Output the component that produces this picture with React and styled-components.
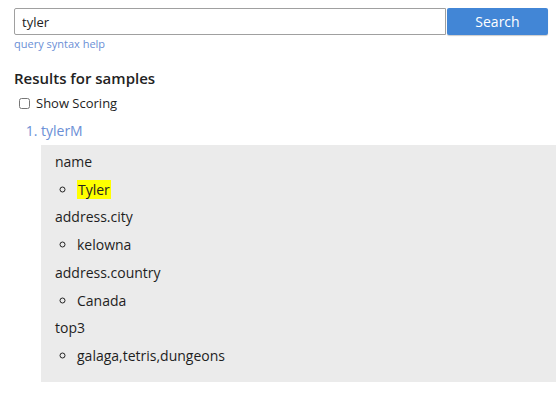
import styled, { createGlobalStyle } from "styled-components";

const GlobalStyle = createGlobalStyle`
  html, body {
    margin: 0;
    padding: 0;
    background: #fff;
    font-family: "Open Sans", "Liberation Sans", sans-serif;
    color: #222;
  }
`;

const Page = styled.div`
  padding: 8px 0 0 14px;
`;

const SearchBar = styled.form`
  display: flex;
  width: 534px;
  height: 27px;
`;

const SearchInput = styled.input`
  flex: 1;
  box-sizing: border-box;
  height: 27px;
  border: 1px solid #a0a0a0;
  border-radius: 2px 0 0 2px;
  padding: 0 7px;
  font-family: inherit;
  font-size: 13px;
  color: #222;
  outline: none;
`;

const SearchButton = styled.button`
  width: 101px;
  height: 27px;
  margin-left: 1px;
  border: none;
  border-radius: 2px;
  background: #4286d6;
  color: #fff;
  font-family: inherit;
  font-size: 14px;
  box-shadow: 0 1px 1px rgba(0, 0, 0, 0.2);
`;

const HelpLink = styled.a`
  display: block;
  margin-top: 2px;
  font-size: 11px;
  color: #6b8fd6;
  text-decoration: none;
  line-height: 14px;
`;

const Heading = styled.h3`
  margin: 17px 0 0;
  font-size: 15px;
  font-weight: 600;
  line-height: 20px;
`;

const ScoreToggle = styled.label`
  display: flex;
  align-items: center;
  gap: 6px;
  margin: 6px 0 0 5px;
  font-size: 13px;
  line-height: 18px;
  input {
    margin: 0;
    width: 11px;
    height: 11px;
  }
`;

const ResultList = styled.ol`
  margin: 9px 0 0;
  padding: 0 0 0 27px;
  font-size: 14px;
  > li::marker {
    color: #6b8fd6;
  }
`;

const ResultName = styled.a`
  color: #6b8fd6;
  text-decoration: none;
  line-height: 20px;
`;

const FieldBox = styled.div`
  margin: 4px 0 0;
  padding: 3px 14px 12px;
  background: #ebebeb;
  color: #1e1e1e;
`;

const FieldName = styled.div`
  line-height: 27.7px;
`;

const ValueList = styled.ul`
  margin: 0;
  padding: 0 0 0 22px;
  list-style: circle;
  li {
    line-height: 27.7px;
  }
  li::marker {
    color: #222;
  }
`;

const Mark = styled.mark`
  background: #ffff00;
  color: #222;
  padding: 0 1px;
`;

const fields = [
  { name: "name", value: "Tyler", hit: true },
  { name: "address.city", value: "kelowna" },
  { name: "address.country", value: "Canada" },
  { name: "top3", value: "galaga,tetris,dungeons" },
];

export default function App() {
  return (
    <>
      <GlobalStyle />
      <Page>
        <SearchBar onSubmit={(e) => e.preventDefault()}>
          <SearchInput defaultValue="tyler" />
          <SearchButton type="submit">Search</SearchButton>
        </SearchBar>
        <HelpLink href="#">query syntax help</HelpLink>
        <Heading>Results for samples</Heading>
        <ScoreToggle>
          <input type="checkbox" />
          Show Scoring
        </ScoreToggle>
        <ResultList>
          <li>
            <ResultName href="#">tylerM</ResultName>
            <FieldBox>
              {fields.map((f) => (
                <div key={f.name}>
                  <FieldName>{f.name}</FieldName>
                  <ValueList>
                    <li>{f.hit ? <Mark>{f.value}</Mark> : f.value}</li>
                  </ValueList>
                </div>
              ))}
            </FieldBox>
          </li>
        </ResultList>
      </Page>
    </>
  );
}
